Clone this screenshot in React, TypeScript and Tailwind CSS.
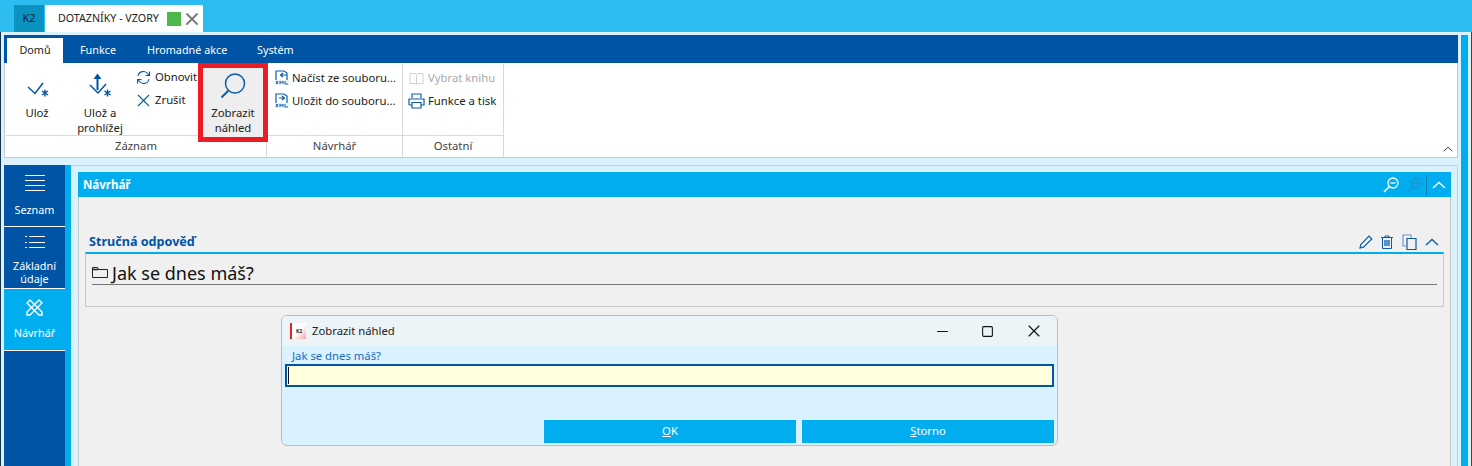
import { X, Minus, Square } from "lucide-react"

const Star = ({ x, y }: { x: number; y: number }) => (
  <g stroke="#0054a6" strokeWidth="1.400">
    <path d={`M${x} ${y - 3.5}V${y + 3.5}M${x - 3} ${y - 2}L${x + 3} ${y + 2}M${x + 3} ${y - 2}L${x - 3} ${y + 2}`} />
  </g>
)

function SaveIcon() {
  return (
    <svg width="24" height="24" viewBox="0 0 24 24" fill="none">
      <path d="M3 10l7 6.500L18 6" stroke="#0054a6" strokeWidth="1.500" />
      <Star x={20} y={16} />
    </svg>
  )
}

function SaveBrowseIcon() {
  return (
    <svg width="26" height="28" viewBox="0 0 26 28" fill="none">
      <path d="M3 15l8 8L19 14" stroke="#0054a6" strokeWidth="1.500" />
      <path d="M10.500 20V6" stroke="#0054a6" strokeWidth="2" />
      <path d="M6.500 9l4-5.500 4 5.500z" fill="#0054a6" />
      <Star x={20.500} y={23} />
    </svg>
  )
}

function SearchIcon() {
  return (
    <svg width="28" height="28" viewBox="0 0 28 28" fill="none" stroke="#0a5ca8">
      <circle cx="16" cy="11.500" r="9.500" strokeWidth="1.500" />
      <path d="M9.500 18.500L2.500 25.500" strokeWidth="2" />
    </svg>
  )
}

function XmlIcon({ save }: { save?: boolean }) {
  return (
    <svg width="14" height="16" viewBox="0 0 14 16" fill="none">
      <path d="M1 10V1h8l3 2v7" stroke="#0a5ca8" strokeWidth="1.200" />
      <path d={save ? "M4 5h5M7 3l2.500 2L7 7" : "M6 5h6M8 3L5.500 5 8 7"} stroke="#0a5ca8" strokeWidth="1.200" />
      <rect x="0" y="10" width="14" height="5" fill="#e8f1f8" />
      <path d="M1 11l2 3M3 11l-2 3M5 14v-3l1.500 2L8 11v3M10 11v3h3" stroke="#0a5ca8" strokeWidth="0.900" />
    </svg>
  )
}

function ListIcon() {
  return (
    <svg width="20" height="16" viewBox="0 0 20 16" stroke="white" strokeWidth="1">
      <path d="M0 .500H20M0 5.500H20M0 10.500H20M0 15.500H20" />
    </svg>
  )
}

function DottedListIcon() {
  return (
    <svg width="20" height="12" viewBox="0 0 20 12" stroke="white" strokeWidth="1">
      <path d="M0 .500H2M4 .500H20M0 6.500H2M4 6.500H20M0 11.500H2M4 11.500H20" />
    </svg>
  )
}

function ToolsIcon() {
  return (
    <svg width="17" height="17" viewBox="0 0 17 17" fill="none" stroke="white" strokeWidth="1.400">
      <path d="M1 4l3-3 12 12v3h-3z" />
      <path d="M16 4l-3-3L1 13v3h3z" />
    </svg>
  )
}

function Chevron({ color, size = 14 }: { color: string; size?: number }) {
  return (
    <svg width={size} height={size / 2 + 1} viewBox="0 0 14 8" fill="none" stroke={color} strokeWidth="1.300">
      <path d="M1 7l6-5.500L13 7" />
    </svg>
  )
}

function ZoomIcon({ color, plus }: { color: string; plus?: boolean }) {
  return (
    <svg width="16" height="16" viewBox="0 0 16 16" fill="none" stroke={color} strokeWidth="1.300">
      <circle cx="10" cy="6" r="5" />
      <path d="M6.500 9.500L1 15" strokeWidth="1.600" />
      <path d={plus ? "M7.500 6h5M10 3.500v5" : "M7.500 6h5"} />
    </svg>
  )
}

function RibbonLabel({ children }: { children: string }) {
  return <div className="h-[21px] leading-[19px] text-center text-[#444] border-t border-[#d9d9d9]">{children}</div>
}

export default function App() {
  return (
    <div className="w-[1472px] h-[466px] overflow-hidden relative flex flex-col bg-[#d9f2fe] text-[11.3px] font-['Noto_Sans','Open_Sans',sans-serif] text-[#222]">
      {/* Titulek s kartami */}
      <div className="h-8 bg-[#2dbcf0] flex items-end pl-[14px] gap-px shrink-0">
        <div className="w-[30px] h-[27px] bg-[#0a93c1] text-[#10242c] flex items-center justify-center text-[11px]">K2</div>
        <div className="w-[158px] h-[27px] bg-white flex items-center pl-[13px]">
          <span className="w-[109px] text-[10.7px] whitespace-nowrap">DOTAZNÍKY - VZORY</span>
          <span className="w-[14px] h-[14px] bg-[#4cb848] shrink-0" />
          <X className="ml-px text-[#777] shrink-0" size={20} strokeWidth={2.200} />
        </div>
      </div>

      <div className="flex-1 flex pt-[3px] min-h-0 border-r border-[#0a4f94] border-l border-l-[#17324d]">
        <div className="w-[1454px] ml-[3px] flex flex-col min-h-0">
          {/* Ribbon */}
          <div className="h-[123px] shrink-0 flex flex-col">
            <div className="h-7 bg-[#0054a6] flex items-end pl-[3px] text-white text-[10.8px]">
              <div className="w-[56px] h-[25px] bg-white text-[#222] flex items-center justify-center">Domů</div>
              <div className="ml-[17px] w-[37px] h-[25px] flex items-center">Funkce</div>
              <div className="ml-[30px] w-[80px] h-[25px] flex items-center whitespace-nowrap">Hromadné akce</div>
              <div className="ml-[30px] h-[25px] flex items-center">Systém</div>
            </div>
            <div className="flex-1 bg-white border-l border-r border-b border-[#c8c8c8] flex pl-px relative">
              {/* Záznam */}
              <div className="w-[261px] flex flex-col border-r border-[#d9d9d9] mt-px shrink-0">
                <div className="h-[71px] flex">
                  <div className="w-[62px] flex flex-col items-center pt-[13px] shrink-0">
                    <SaveIcon />
                    <span className="mt-[4px]">Ulož</span>
                  </div>
                  <div className="w-[64px] flex flex-col items-center pt-[6px] leading-[15px] shrink-0">
                    <SaveBrowseIcon />
                    <span className="mt-[7px]">Ulož a</span>
                    <span>prohlížej</span>
                  </div>
                  <div className="w-[66px] flex flex-col gap-[5px] pt-[4px] pl-[4px] shrink-0">
                    <div className="flex items-center gap-[4px] h-[18px]">
                      <svg width="15" height="15" viewBox="0 0 15 15" fill="none" stroke="#0a5ca8" strokeWidth="1.100">
                        <path d="M2 6a5.500 5.500 0 0 1 10-2l1 1.500M13.500 1.500v4h-4M13 9a5.500 5.500 0 0 1-10 2l-1-1.500M1.500 13.500v-4h4" />
                      </svg>
                      <span className="whitespace-nowrap">Obnovit</span>
                    </div>
                    <div className="flex items-center gap-[4px] h-[18px]">
                      <svg width="15" height="15" viewBox="0 0 15 15" fill="none" stroke="#0a5ca8" strokeWidth="1.100">
                        <path d="M2 2l11 11M13 2L2 13" />
                      </svg>
                      <span>Zrušit</span>
                    </div>
                  </div>
                  <div className="w-[70px] h-[79px] -mt-px bg-[#eeeeee] border-[5px] border-[#ed1c24] flex flex-col items-center pt-[4px] leading-[15px] shrink-0 z-10">
                    <SearchIcon />
                    <span className="mt-[5px] whitespace-nowrap">Zobrazit</span>
                    <span>náhled</span>
                  </div>
                </div>
                <RibbonLabel>Záznam</RibbonLabel>
              </div>
              {/* Návrhář */}
              <div className="w-[136px] flex flex-col border-r border-[#d9d9d9] mt-px shrink-0">
                <div className="h-[71px] pl-[8px] pt-[5px] flex flex-col gap-[5px]">
                  <div className="flex items-center gap-[3px] h-[18px] whitespace-nowrap">
                    <XmlIcon />
                    Načíst ze souboru...
                  </div>
                  <div className="flex items-center gap-[3px] h-[18px] whitespace-nowrap">
                    <XmlIcon save />
                    Uložit do souboru...
                  </div>
                </div>
                <RibbonLabel>Návrhář</RibbonLabel>
              </div>
              {/* Ostatní */}
              <div className="w-[101px] flex flex-col border-r border-[#d9d9d9] mt-px shrink-0">
                <div className="h-[71px] pl-[5px] pt-[5px] flex flex-col gap-[5px]">
                  <div className="flex items-center gap-[4px] h-[18px] whitespace-nowrap text-[#a9a9a9] pl-px">
                    <svg width="15" height="13" viewBox="0 0 15 13" fill="none" stroke="#cfcfcf">
                      <path d="M1 1.500h5l1.500 1 1.500-1h5v10H9l-1.500 1-1.500-1H1zM7.500 2.500v9" />
                    </svg>
                    Vybrat knihu
                  </div>
                  <div className="flex items-center gap-[3px] h-[18px] whitespace-nowrap">
                    <svg width="17" height="16" viewBox="0 0 17 16" fill="none" stroke="#0a5ca8" strokeWidth="1.200">
                      <path d="M4 5V1h9v4M1 12V6h15v6h-3M4 12H1M4 9.500h9v5.500H4z" />
                    </svg>
                    Funkce a tisk
                  </div>
                </div>
                <RibbonLabel>Ostatní</RibbonLabel>
              </div>
              <div className="absolute right-[4px] bottom-[5px]">
                <Chevron color="#333" size={10} />
              </div>
            </div>
          </div>

          <div className="flex-1 flex pt-[7px] min-h-0">
            {/* Levé menu */}
            <div className="w-[67px] flex shrink-0 bg-[#00aeef]">
              <div className="w-[61px] bg-[#0054a6] text-white text-[10.8px] flex flex-col">
                <div className="h-[62px] flex flex-col items-center pt-[10px] border-b border-white">
                  <ListIcon />
                  <span className="mt-[11px]">Seznam</span>
                </div>
                <div className="h-[62px] flex flex-col items-center pt-[9px] border-b border-white">
                  <DottedListIcon />
                  <span className="mt-[11px] leading-[13px] text-center">Základní<br />údaje</span>
                </div>
                <div className="h-[62px] flex flex-col items-center pt-[10px] border-b border-white bg-[#00aeef]">
                  <ToolsIcon />
                  <span className="mt-[9px]">Návrhář</span>
                </div>
              </div>
            </div>

            {/* Obsah */}
            <div className="flex-1 border-t border-r border-[#9fdff9] pt-[6px] pl-[7px] pr-[6px] min-w-0">
              <div className="h-full bg-[#f0f0f0] border-r border-l border-[#c8c8c8] flex flex-col">
                <div className="h-[25px] bg-[#00aeef] -mx-px flex items-center pl-[5px] text-white text-[11.500px] font-bold shrink-0">
                  <span className="flex-1">Návrhář</span>
                  <ZoomIcon color="white" />
                  <span className="ml-[8px]"><ZoomIcon color="#1a94cc" plus /></span>
                  <span className="ml-[3px] w-px h-[20px] bg-[#0a7fb5]" />
                  <span className="ml-[5px] mr-[5px]"><Chevron color="white" /></span>
                </div>

                <div className="mt-[35px] mx-[6px]">
                  <div className="h-[20px] flex items-center pl-[4px] text-[#0054a6] text-[12.600px] font-bold">
                    <span className="flex-1">Stručná odpověď</span>
                    <svg width="14" height="14" viewBox="0 0 14 14" fill="none" stroke="#0a5ca8" strokeWidth="1.200">
                      <path d="M1 13l.800-3.500L10 1.200 12.800 4 4.500 12.200z" />
                    </svg>
                    <svg className="ml-[8px]" width="12" height="14" viewBox="0 0 12 14" fill="none" stroke="#0a5ca8">
                      <path d="M0 2.500h12M4 2.500V1h4v1.500M1.500 2.500h9v11h-9z" />
                      <path d="M4 5v6M6 5v6M8 5v6" strokeWidth="1.300" />
                    </svg>
                    <svg className="ml-[9px]" width="15" height="16" viewBox="0 0 15 16" fill="none" stroke="#0a5ca8" strokeWidth="1.200">
                      <path d="M4 12H1V1h8v3" stroke="#6e9cc9" />
                      <path d="M5 4.500h9v11H5z" />
                    </svg>
                    <span className="ml-[8px] mr-[5px]"><Chevron color="#0a5ca8" /></span>
                  </div>
                  <div className="h-[55px] border-t-2 border-t-[#00aeef] border-x border-b border-[#c8c8c8] px-[6px] pt-[7px]">
                    <div className="h-[24px] flex items-center border-b border-[#777] text-[18px] leading-[22px] text-[#111]">
                      <svg className="mr-[4px]" width="16" height="11" viewBox="0 0 16 11" fill="none" stroke="#222">
                        <path d="M.500 10.500V.500h5l1 2h9v8z" />
                        <path d="M.500 2.500h6" strokeWidth="1.500" />
                      </svg>
                      Jak se dnes máš?
                    </div>
                  </div>
                </div>
              </div>
            </div>
          </div>
        </div>
        {/* Pravý pruh */}
        <div className="ml-[3px] w-[7px] bg-[#00aeef] shrink-0" />
      </div>

      {/* Dialog */}
      <div className="absolute left-[281px] top-[315px] w-[777px] h-[131px] rounded-[6px] border border-[#bdbdbd] bg-[#d9f2fe] overflow-hidden flex flex-col">
        <div className="h-[30px] bg-[#ecf4f8] flex items-center pl-[8px] shrink-0">
          <div className="w-[16px] h-[16px] bg-white border-l-2 border-[#ed2024] text-[5px] font-bold leading-[16px] text-center text-[#222] bg-gradient-to-br from-white via-white to-[#f5a3a3]">K2</div>
          <span className="ml-[6px] flex-1">Zobrazit náhled</span>
          <Minus className="text-[#111]" size={17} strokeWidth={1.500} />
          <Square className="ml-[30px] text-[#111]" size={13} strokeWidth={2} />
          <X className="ml-[30px] mr-[13px] text-[#111]" size={20} strokeWidth={1.400} />
        </div>
        <div className="flex-1 px-[3px] flex flex-col">
          <div className="h-[18px] pl-[7px] pt-[2px] leading-[16px] text-[#1a6cc4]">Jak se dnes máš?</div>
          <div className="h-[23px] border-2 border-[#0054a6] bg-[#ffffe0] pl-px py-px">
            <div className="w-px h-full bg-[#111]" />
          </div>
          <div className="mt-[33px] flex justify-end gap-[6px] text-white">
            <div className="w-[252px] h-[23px] bg-[#00aeef] flex items-center justify-center"><span><u>O</u>K</span></div>
            <div className="w-[252px] h-[23px] bg-[#00aeef] flex items-center justify-center"><span><u>S</u>torno</span></div>
          </div>
        </div>
      </div>
    </div>
  )
}
